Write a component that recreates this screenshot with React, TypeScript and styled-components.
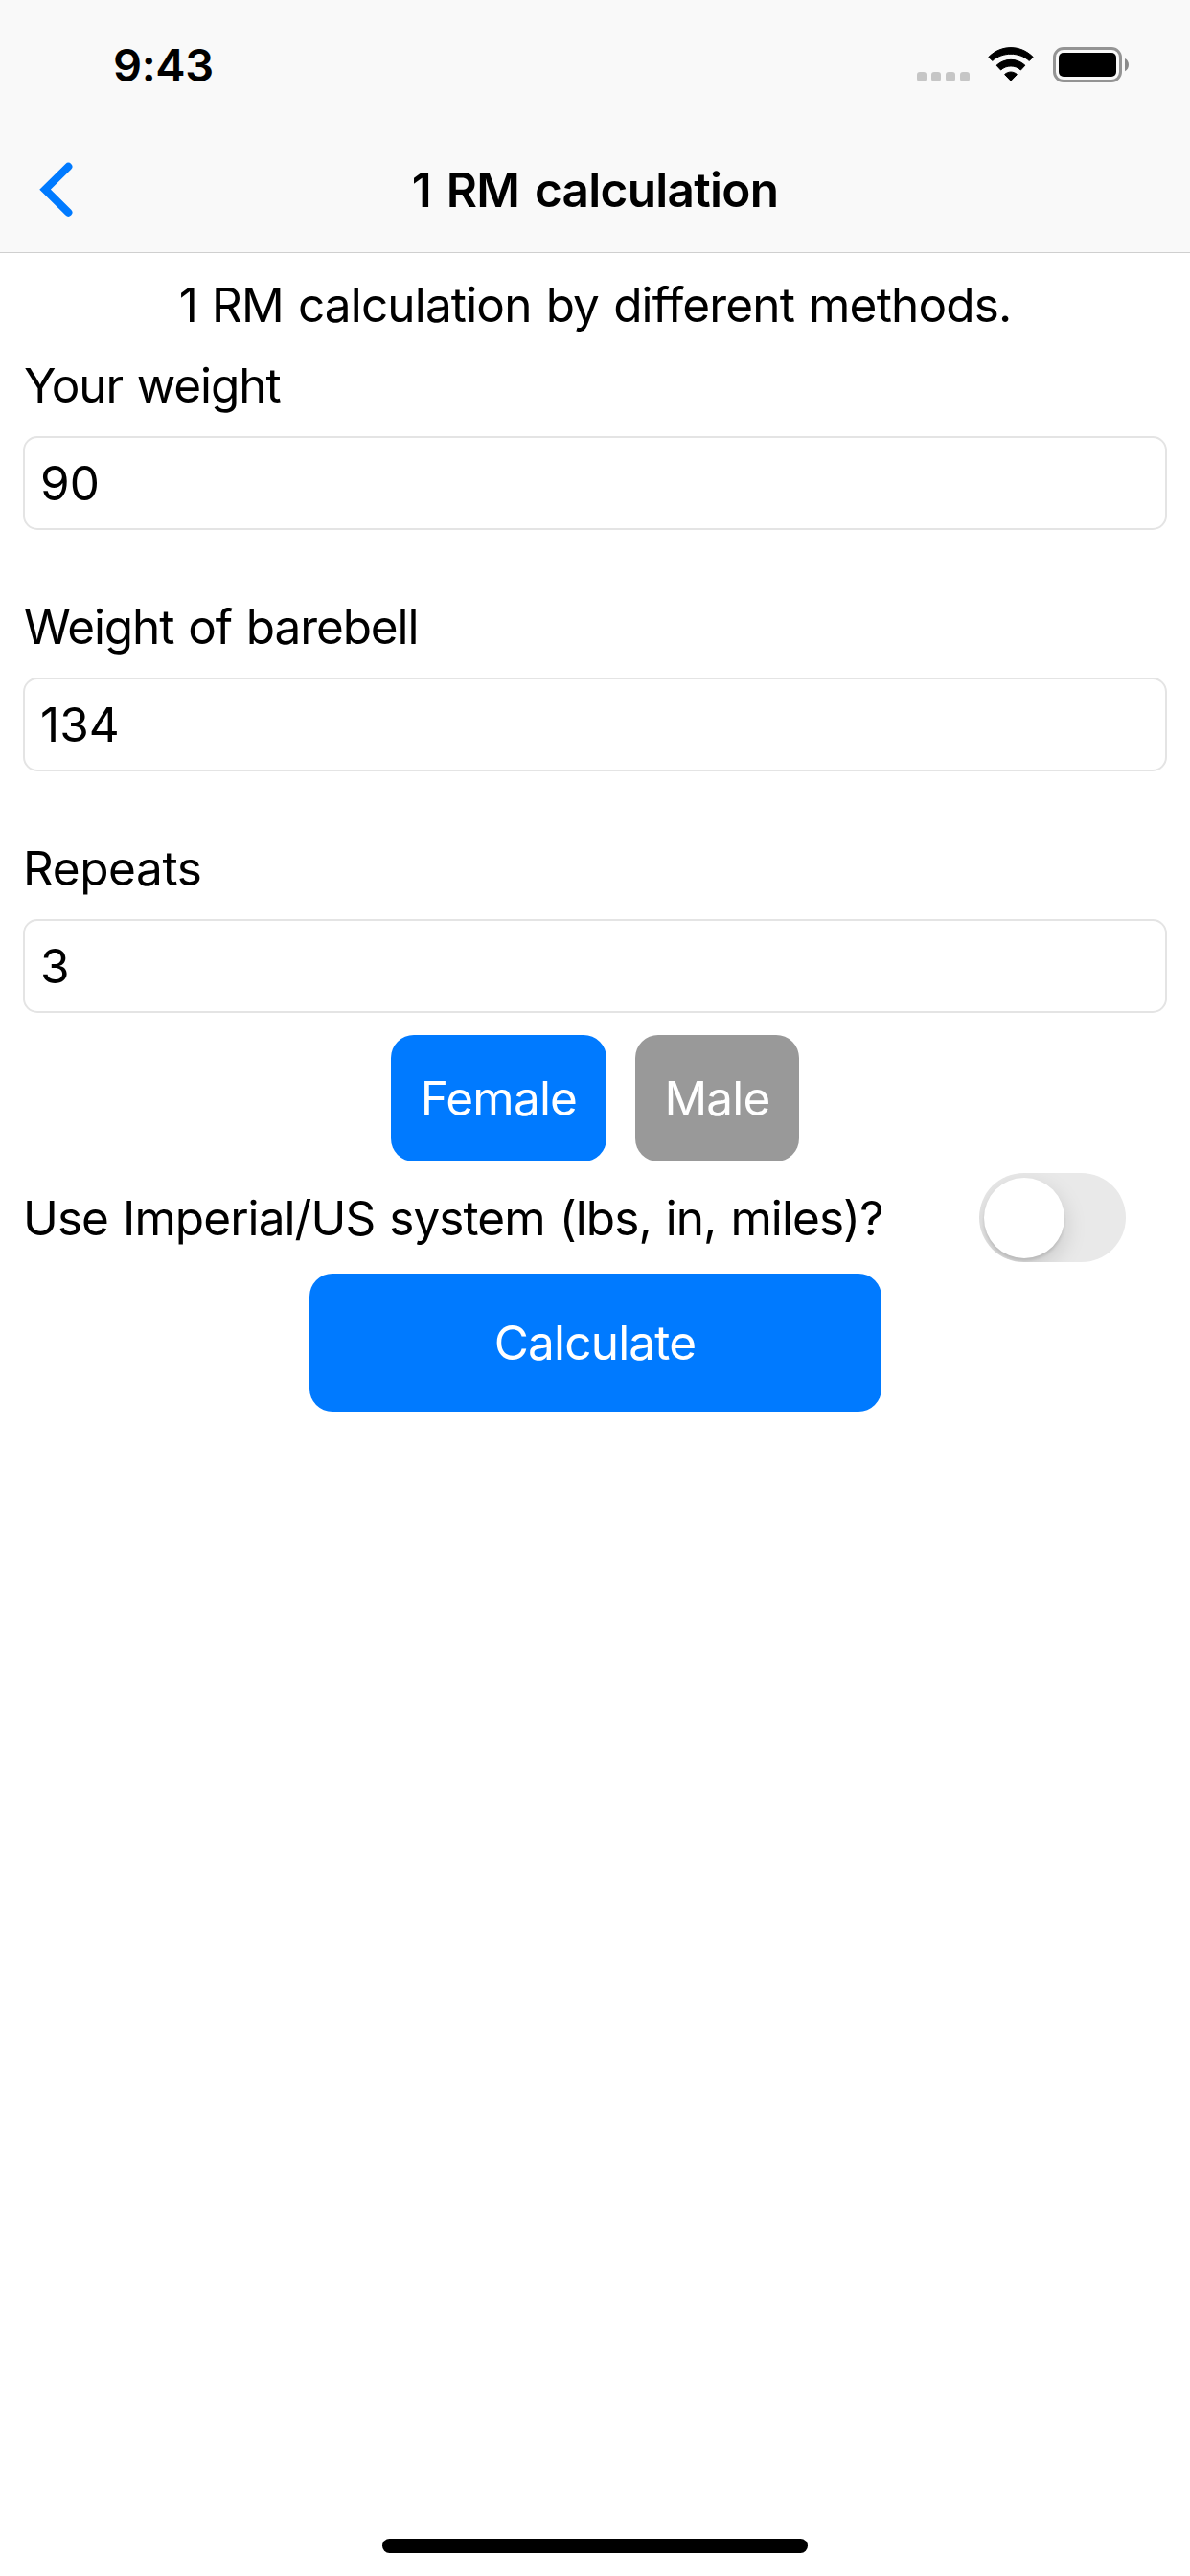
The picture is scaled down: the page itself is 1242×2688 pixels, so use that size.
import React from "react";
import styled, { createGlobalStyle } from "styled-components";

const GlobalStyle = createGlobalStyle`
  * { box-sizing: border-box; }
  body { margin: 0; background: #fff; }
`;

const Screen = styled.div`
  display: flex;
  flex-direction: column;
  width: 1242px;
  height: 2688px;
  overflow: hidden;
  background: #fff;
  color: #000;
  font-family: Inter, "Liberation Sans", sans-serif;
  font-size: 49.5px;
  line-height: 60px;
  word-spacing: 2px;
`;

const Header = styled.header`
  height: 264px;
  background: #f9f9f9;
  border-bottom: 1px solid #cfcfcf;
`;

const StatusBar = styled.div`
  display: flex;
  justify-content: space-between;
  height: 132px;
  padding: 38px 64px 34px 118px;
`;

const Time = styled.span`
  font-size: 47px;
  font-weight: 600;
  letter-spacing: -0.4px;
`;

const StatusIcons = styled.div`
  display: flex;
  align-items: flex-start;
  padding-top: 11px;
`;

const Signal = styled.div`
  display: flex;
  gap: 5px;
  margin: 26px 19px 0 0;
`;

const Dot = styled.i`
  width: 10px;
  height: 10px;
  border-radius: 3px;
  background: #c6c6c6;
`;

const NavBar = styled.nav`
  display: grid;
  grid-template-columns: 120px 1fr 120px;
  align-items: center;
  height: 131px;
`;

const BackButton = styled.button`
  display: flex;
  padding: 0 0 0 36px;
  border: 0;
  background: none;
`;

const Title = styled.h1`
  margin: 0;
  font-size: inherit;
  font-weight: 600;
  text-align: center;
  white-space: nowrap;
  letter-spacing: -0.7px;
  word-spacing: 4px;
`;

const Content = styled.main`
  display: flex;
  flex: 1;
  flex-direction: column;
`;

const Text = styled.span<{ $spacing?: number }>`
  white-space: nowrap;
  letter-spacing: ${(p) => p.$spacing ?? 0}px;
`;

const Description = styled.p`
  margin: 0;
  height: 108px;
  padding-top: 24px;
  text-align: center;
`;

const Field = styled.label`
  display: flex;
  flex-direction: column;
  gap: 23px;
  padding: 0 24px;
  margin-bottom: 71px;
`;

const Caption = styled(Text)<{ $indent: number }>`
  padding-left: ${(p) => p.$indent}px;
`;

const Input = styled.input`
  width: 100%;
  height: 98px;
  padding: 0 16px;
  border: 2px solid #e4e4e4;
  border-radius: 15px;
  outline: 0;
  background: #fff;
  color: inherit;
  font: inherit;
`;

const GenderRow = styled.div`
  display: flex;
  justify-content: center;
  gap: 30px;
  margin-top: -48px;
`;

const Button = styled.button<{ $width: number; $height: number; $muted?: boolean }>`
  width: ${(p) => p.$width}px;
  height: ${(p) => p.$height}px;
  padding: 0;
  border: 0;
  border-radius: 24px;
  background: ${(p) => (p.$muted ? "#999" : "#007aff")};
  color: #fff;
  font: inherit;
`;

const SwitchRow = styled.div`
  display: flex;
  align-items: center;
  justify-content: space-between;
  height: 93px;
  margin: 12px 0;
  padding: 0 67px 0 24px;
`;

const Switch = styled.div`
  display: flex;
  align-items: center;
  width: 153px;
  height: 93px;
  padding-left: 5px;
  border-radius: 47px;
  overflow: hidden;
  background: #e9e9e9;
`;

const Knob = styled.div`
  width: 84px;
  height: 84px;
  border-radius: 50%;
  background: #fff;
  box-shadow: 0 9px 24px rgba(0, 0, 0, 0.15), 0 3px 3px rgba(0, 0, 0, 0.1);
`;

const Submit = styled(Button)`
  align-self: center;
`;

const HomeIndicator = styled.div`
  align-self: center;
  width: 444px;
  height: 15px;
  margin-bottom: 24px;
  border-radius: 8px;
  background: #000;
`;

const BatterySvg = styled.svg`
  margin-left: 20px;
`;

function WifiIcon() {
  return (
    <svg width="48" height="36" viewBox="0 0 48 36" stroke="#000" strokeWidth="1" strokeLinejoin="round">
      <path d="M.8 10.5C14 -2.7 34 -2.7 47.2 10.5L43.3 14.4C32.4 4.9 15.6 4.9 4.7 14.4Z" />
      <path d="M9.1 19.2C17.5 11.4 30.5 11.4 38.9 19.2L34.4 24C28.6 18.6 19.4 18.6 13.6 24Z" />
      <path d="M17.6 28.6C21.3 25.2 26.7 25.2 30.4 28.6L24 35.2Z" />
    </svg>
  );
}

function BatteryIcon() {
  return (
    <BatterySvg width="79" height="37" viewBox="0 0 79 37">
      <rect x="1.5" y="1.5" width="69" height="34" rx="9.5" fill="none" stroke="#949494" strokeWidth="3" />
      <rect x="6" y="6" width="60" height="25" rx="5" />
      <path d="M75 12C80.3 14.2 80.3 23 75 25.2Z" fill="#8a8a8a" />
    </BatterySvg>
  );
}

const fields = [
  { label: "Your weight", value: "90", spacing: -1.1, indent: 1 },
  { label: "Weight of barebell", value: "134", spacing: -1.1, indent: 1 },
  { label: "Repeats", value: "3", spacing: -0.4, indent: 0 },
];

export default function App() {
  return (
    <Screen>
      <GlobalStyle />
      <Header>
        <StatusBar>
          <Time>9:43</Time>
          <StatusIcons>
            <Signal>
              <Dot />
              <Dot />
              <Dot />
              <Dot />
            </Signal>
            <WifiIcon />
            <BatteryIcon />
          </StatusIcons>
        </StatusBar>
        <NavBar>
          <BackButton aria-label="Back">
            <svg width="44" height="60" viewBox="0 0 44 60" fill="none" stroke="#007aff" strokeWidth="8.2" strokeLinecap="round">
              <path d="M35.3 5.8L11.1 29.7L35.3 53.7" />
            </svg>
          </BackButton>
          <Title>1 RM calculation</Title>
        </NavBar>
      </Header>
      <Content>
        <Description>
          <Text $spacing={-0.85}>1 RM calculation by different methods.</Text>
        </Description>
        {fields.map((f) => (
          <Field key={f.label}>
            <Caption $spacing={f.spacing} $indent={f.indent}>
              {f.label}
            </Caption>
            <Input defaultValue={f.value} />
          </Field>
        ))}
        <GenderRow>
          <Button $width={225} $height={132}>
            <Text $spacing={-0.8}>Female</Text>
          </Button>
          <Button $width={171} $height={132} $muted>
            <Text $spacing={-0.8}>Male</Text>
          </Button>
        </GenderRow>
        <SwitchRow>
          <Text $spacing={-0.93}>Use Imperial/US system (lbs, in, miles)?</Text>
          <Switch role="switch" aria-checked="false">
            <Knob />
          </Switch>
        </SwitchRow>
        <Submit $width={597} $height={144}>
          <Text $spacing={-0.8}>Calculate</Text>
        </Submit>
      </Content>
      <HomeIndicator />
    </Screen>
  );
}
